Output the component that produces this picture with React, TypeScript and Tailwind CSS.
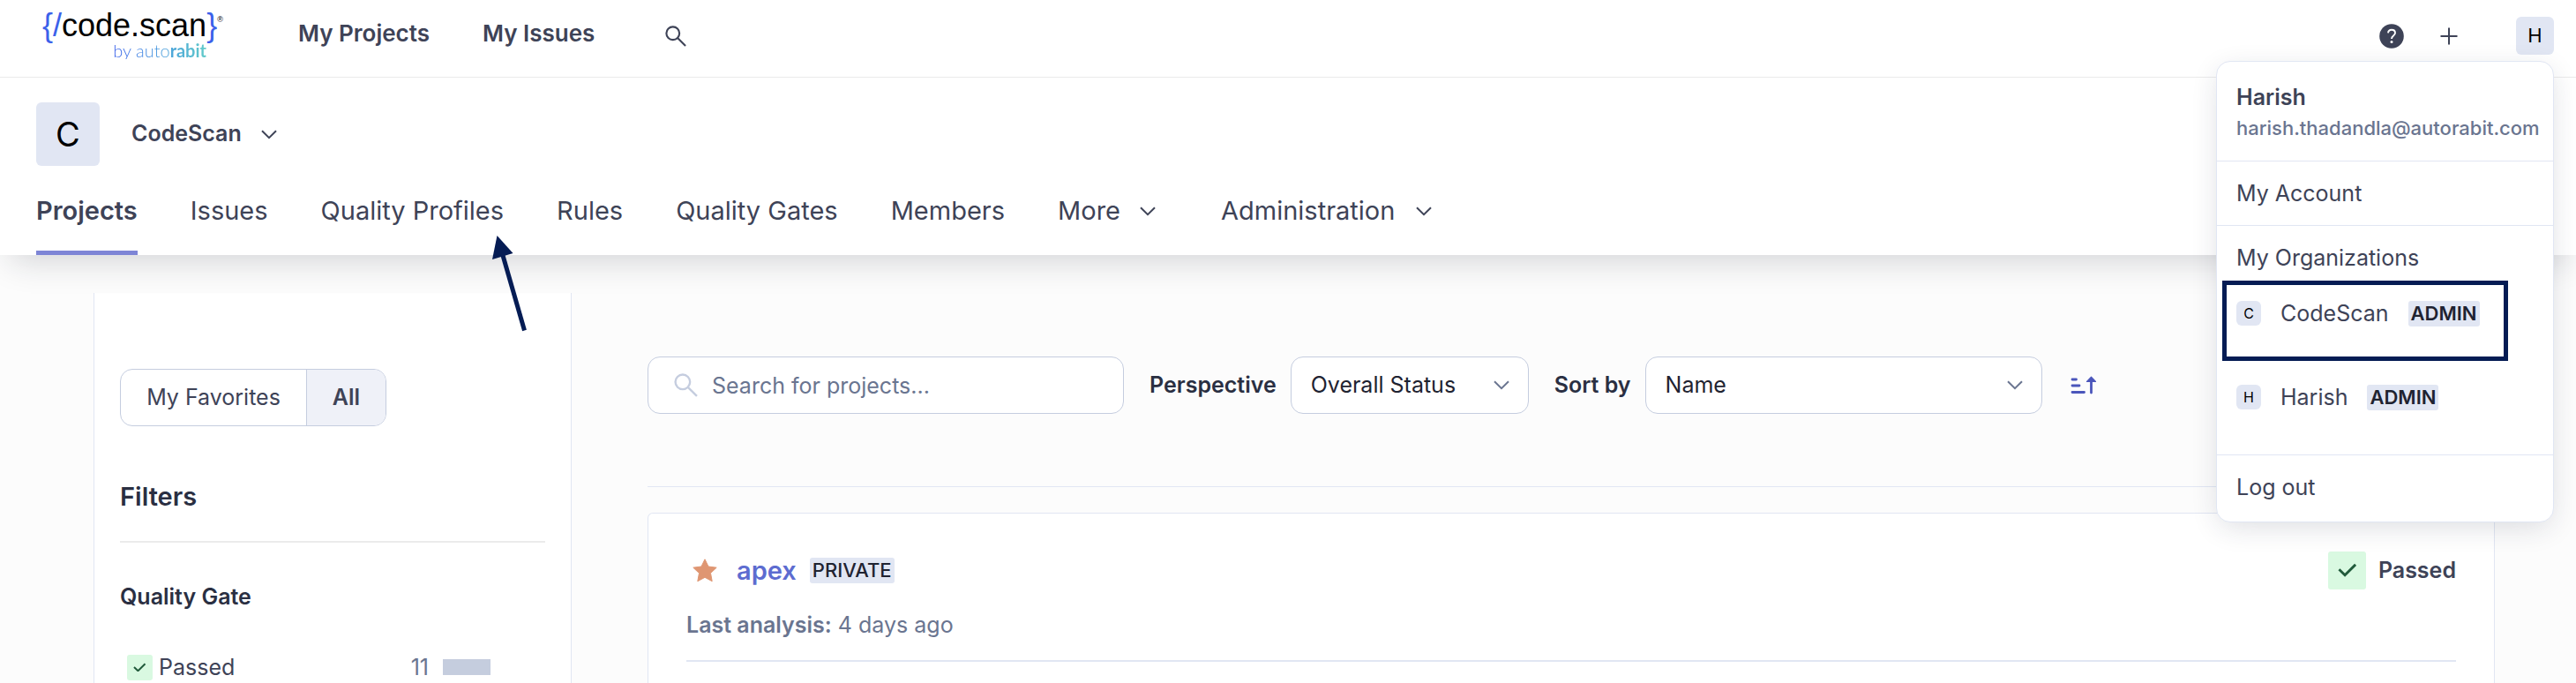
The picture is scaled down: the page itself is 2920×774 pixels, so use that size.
import type { ReactNode } from "react";

function Chevron({ className = "" }: { className?: string }) {
  return (
    <svg viewBox="0 0 18 11" aria-hidden="true" className={"h-[11px] w-[18px] shrink-0 " + className} fill="none" stroke="currentColor" strokeWidth="2">
      <path d="M1 1.2 9 9.2l8-8" />
    </svg>
  );
}

function SearchGlyph({ className = "" }: { className?: string }) {
  return (
    <svg viewBox="0 0 26 26" aria-hidden="true" className={"shrink-0 " + className} fill="none" stroke="currentColor" strokeWidth="2.3">
      <circle cx="9.5" cy="9.5" r="8" />
      <path d="M15 15l10 10" />
    </svg>
  );
}

function Check({ className = "" }: { className?: string }) {
  return (
    <span className={"flex shrink-0 items-center justify-center bg-[#d9f9e1] text-[#215a3b] " + className}>
      <svg viewBox="0 0 24 18" aria-hidden="true" className="w-1/2" fill="none" stroke="currentColor" strokeWidth="3.2">
        <path d="M1.6 8.2 9 15.4 22.4 2" />
      </svg>
    </span>
  );
}

function Badge({ children, bold }: { children: ReactNode; bold?: boolean }) {
  return (
    <span className={"rounded-[3px] bg-[#e1e6f3] px-[3px] text-[22px] leading-[29px] text-[#1f2331] " + (bold ? "font-semibold" : "font-medium")}>
      {children}
    </span>
  );
}

function Logo() {
  return (
    <a href="#home" className="flex w-[206px] flex-col pb-1 font-['Liberation_Sans',sans-serif] text-black">
      <span className="flex items-start text-[36px] leading-9">
        <span className="text-[#3c61ea]">{"{/"}</span>
        <span>code.scan</span>
        <span className="text-[#3c61ea]">{"}"}</span>
        <span className="text-[9px] leading-[22px]">®</span>
      </span>
      <span className="self-end bg-linear-to-r from-[#3c61ea] to-[#6fdcc0] bg-clip-text pr-5 font-['Lato',sans-serif] text-[20px] leading-5 font-light text-transparent">
        by auto<b className="font-bold">rabit</b>
      </span>
    </a>
  );
}

const tabs = ["Issues", "Quality Profiles", "Rules", "Quality Gates", "Members"];

function OrgRow({ name, className = "" }: { name: string; className?: string }) {
  return (
    <a href={"#" + name} className={"flex items-start " + className}>
      <span className="mr-[22px] flex size-7 items-center justify-center rounded-md bg-[#e1e6f3] text-[16px] text-black">{name[0]}</span>
      <span className="mr-[22px] leading-7">{name}</span>
      <Badge bold>ADMIN</Badge>
    </a>
  );
}

function AccountMenu() {
  return (
    <div className="absolute top-full right-0 z-20 mt-[7px] flex w-[383px] flex-col rounded-2xl border border-[#e1e6f3] bg-white text-[25px] text-[#3e4357] shadow-[0_8px_32px_-4px_rgba(30,35,60,0.16)]">
      <div className="border-b border-[#e1e6f3] px-[22px] pt-[22px] pb-5">
        <div className="leading-9 font-semibold">Harish</div>
        <div className="text-[22px] leading-[34px] font-medium text-[#6a7590]">harish.thadandla@autorabit.com</div>
      </div>
      <a href="#account" className="border-b border-[#e1e6f3] px-[22px] py-[18px] leading-9">My Account</a>
      <div className="border-b border-[#e1e6f3] pb-[50px]">
        <div className="px-[22px] pt-[18px] pb-2 leading-9">My Organizations</div>
        <div className="ml-[6px] w-[324px] border-[5px] border-[#051c54] pt-[18px] pb-[34px] pl-[11px]">
          <OrgRow name="CodeScan" />
        </div>
        <OrgRow name="Harish" className="px-[22px] pt-[27px]" />
      </div>
      <a href="#logout" className="px-[22px] pt-[18px] pb-[21px] leading-9">Log out</a>
    </div>
  );
}

function SelectBox({ id, label, options, className }: { id: string; label: string; options: string[]; className: string }) {
  return (
    <div className="flex items-center">
      <label htmlFor={id} className="mr-4 text-[25px] font-semibold text-[#2a2f42]">{label}</label>
      <div className={"relative " + className}>
        <select id={id} className="h-[65px] w-full appearance-none rounded-[14px] border border-[#c5cddf] bg-white px-[22px] text-[25px] text-[#1f2331]">
          {options.map((o) => (
            <option key={o}>{o}</option>
          ))}
        </select>
        <Chevron className="pointer-events-none absolute top-[27px] right-[22px] text-[#6a7590]" />
      </div>
    </div>
  );
}

export default function App() {
  return (
    <div className="flex h-screen flex-col overflow-hidden bg-[#fcfcfc] font-['Inter',sans-serif] text-[#3e4357]">
      <header className="relative z-10 bg-white shadow-[0_18px_36px_-12px_rgba(29,33,47,0.19)]">
        <div className="flex h-[88px] items-center border-b border-[#ebebeb] pr-[25px] pb-[6px] pl-12">
          <Logo />
          <nav className="ml-[84px] flex gap-[60px] pb-[6px] text-[26px] font-semibold">
            <a href="#projects">My Projects</a>
            <a href="#issues">My Issues</a>
          </nav>
          <button type="button" aria-label="Search" className="ml-20">
            <SearchGlyph className="size-6" />
          </button>
          <div className="relative ml-auto flex items-center">
            <button type="button" aria-label="Help" className="mr-[41px]">
              <svg viewBox="0 0 28 28" aria-hidden="true" className="size-7" fill="none">
                <circle cx="14" cy="14" r="13.8" fill="#3e4357" />
                <path d="M10 10.4c.2-2.3 1.8-3.7 4-3.7 2.300 0 4 1.400 4 3.500 0 1.700-.9 2.500-2.200 3.500-1.200.9-1.800 1.500-1.800 3.300" stroke="#fff" strokeWidth="1.900" />
                <circle cx="14" cy="20.600" r="1.500" fill="#fff" />
              </svg>
            </button>
            <button type="button" aria-label="Create" className="mr-[66px]">
              <svg viewBox="0 0 20 20" aria-hidden="true" className="size-5" stroke="currentColor" strokeWidth="2">
                <path d="M10 .5v19M.5 10h19" />
              </svg>
            </button>
            <button type="button" aria-label="Account" className="size-[43px] rounded-md bg-[#e1e6f3] text-[22px] text-black">H</button>
            <AccountMenu />
          </div>
        </div>
        <div className="px-[41px] pt-7">
          <div className="flex items-center">
            <span className="flex size-[72px] items-center justify-center rounded-md bg-[#e1e6f3] text-[38px] text-black">C</span>
            <button type="button" className="ml-9 flex items-center gap-[22px] text-[25px] font-semibold">
              CodeScan
              <Chevron />
            </button>
          </div>
          <nav className="relative flex items-start gap-[60px] pt-[33px] text-[29px] leading-9">
            <a href="#org-projects" className="border-b-[5px] border-[#7d85d6] pb-[27px] font-semibold">Projects</a>
            {tabs.map((t) => (
              <a key={t} href={"#" + t}>{t}</a>
            ))}
            <button type="button" className="flex items-center gap-[22px]">
              More
              <Chevron />
            </button>
            <button type="button" className="ml-[14px] flex items-center gap-[24px]">
              Administration
              <Chevron />
            </button>
            <svg viewBox="0 0 44 112" aria-hidden="true" className="absolute top-[78px] left-[515px] h-[112px] w-[44px]">
              <path d="M13 20 38.500 108.500" stroke="#051c54" strokeWidth="5" />
              <path d="M7.500 1 25.500 21 2 28Z" fill="#051c54" />
            </svg>
          </nav>
        </div>
      </header>

      <div className="flex flex-1 items-stretch pt-[43px] pr-[92px] pl-[106px]">
        <aside className="w-[542px] shrink-0 border-x border-[#e1e6f3] bg-white px-[29px] pt-[86px]">
          <div className="flex h-[65px] w-[302px] overflow-hidden rounded-[14px] border border-[#c5cddf] text-[25px]">
            <button type="button" className="flex-1 border-r border-[#c5cddf]">My Favorites</button>
            <button type="button" className="w-[89px] bg-[#eff1f8] font-semibold">All</button>
          </div>
          <h2 className="mt-[62px] border-b-2 border-[#ebebeb] pb-8 text-[29px] leading-9 font-semibold text-[#2a2f42]">Filters</h2>
          <h3 className="mt-[43px] text-[25px] leading-9 font-semibold text-[#2a2f42]">Quality Gate</h3>
          <div className="mt-[44px] flex items-center pl-2 text-[25px] leading-9">
            <Check className="mr-[7px] size-[29px] rounded-[3px]" />
            Passed
            <span className="mr-4 ml-auto text-[#6a7590]">11</span>
            <span className="mr-[62px] h-[18px] w-[54px] bg-[#c5cdde]" />
          </div>
        </aside>

        <main className="ml-[86px] flex min-w-0 flex-1 flex-col pt-[72px]">
          <div className="flex items-center pb-[82px]">
            <div className="relative mr-[29px] w-[540px]">
              <SearchGlyph className="pointer-events-none absolute top-[19px] left-[30px] size-[27px] text-[#c5cddf]" />
              <input type="text" aria-label="Search for projects" placeholder="Search for projects..." className="h-[65px] w-full rounded-[14px] border border-[#c5cddf] bg-white pr-5 pl-[72px] text-[25px] placeholder:text-[#6a7590]" />
            </div>
            <SelectBox id="perspective" label="Perspective" options={["Overall Status", "New Code"]} className="mr-[29px] w-[270px]" />
            <SelectBox id="sort" label="Sort by" options={["Name", "Last analysis date"]} className="mr-[32px] w-[450px]" />
            <button type="button" aria-label="Sort ascending">
              <svg viewBox="0 0 30 22" aria-hidden="true" className="h-[22px] w-[30px]" fill="none" stroke="#4b56bb" strokeWidth="2.800" strokeLinecap="round">
                <path d="M2 4h4.500M2 11h8M2 18.500h13.500" />
                <path d="M23.500 19V6" />
                <path d="M23.500 1.200 28.500 6.500h-10Z" fill="#4b56bb" strokeWidth="1.200" strokeLinejoin="round" />
              </svg>
            </button>
          </div>
          <hr className="border-[#e1e6f3]" />
          <article className="mt-[29px] flex-1 rounded-t-md border border-b-0 border-[#e1e6f3] bg-white px-[43px] pt-[43px]">
            <div className="flex h-[43px] items-center">
              <svg viewBox="0 0 28 27" aria-hidden="true" className="mr-[22px] ml-[7px] h-[27px] w-7" fill="#df9672">
                <path d="M14 .8 18 9l9.200 1.200-6.700 6.300 1.700 9.200L14 21.300l-8.200 4.400 1.700-9.200L.8 10.200 10 9Z" strokeLinejoin="round" stroke="#df9672" />
              </svg>
              <a href="#apex" className="mr-[15px] text-[29px] font-semibold text-[#5d6cd0]">apex</a>
              <Badge>PRIVATE</Badge>
              <Check className="mr-[14px] ml-auto size-[43px] rounded-[3px]" />
              <span className="text-[25px] font-semibold">Passed</span>
            </div>
            <p className="border-b-2 border-[#e1e6f3] pt-[22px] pb-[22px] text-[25px] leading-9 text-[#6a7590]">
              <b className="font-semibold">Last analysis:</b> 4 days ago
            </p>
          </article>
        </main>
      </div>
    </div>
  );
}
